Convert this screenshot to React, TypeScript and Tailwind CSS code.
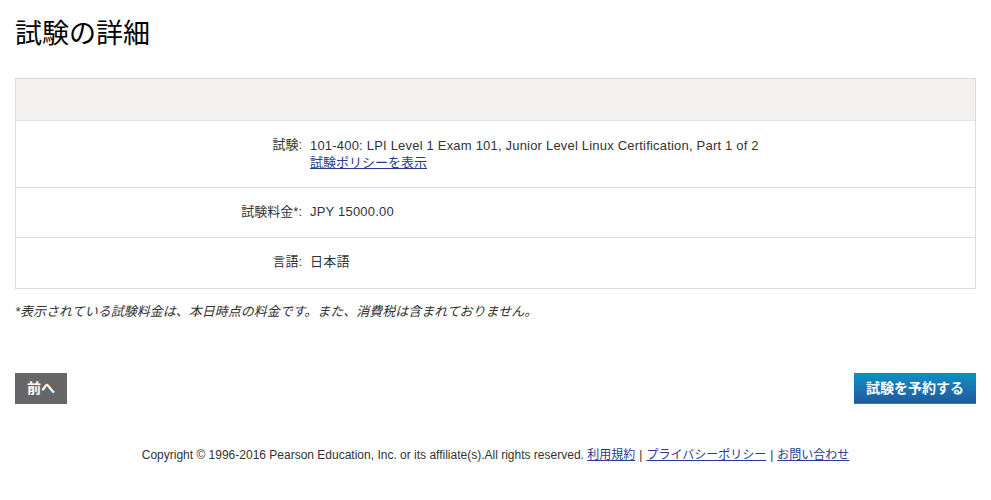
const FONT = "font-['Liberation_Sans','Noto_Sans_CJK_JP',sans-serif]";

const ROWS = [
  {
    label: "試験:",
    value: "101-400: LPI Level 1 Exam 101, Junior Level Linux Certification, Part 1 of 2",
    link: "試験ポリシーを表示",
  },
  { label: "試験料金*:", value: "JPY 15000.00" },
  { label: "言語:", value: "日本語" },
];

function DetailRow({ label, value, link }: { label: string; value: string; link?: string }) {
  return (
    <div className="flex gap-2 border-t border-[#dddddd] py-4 text-[13px] leading-4 text-[#333333] first:border-t-0 last:pb-[17px]">
      <div className="w-[286px] shrink-0 text-right">{label}</div>
      <div>
        <p className={link ? "py-[1px] tracking-[0.2px]" : "pb-[1px] tracking-[0.2px]"}>{value}</p>
        {link && (
          <a href="#" className="text-[#2b3990] underline">
            {link}
          </a>
        )}
      </div>
    </div>
  );
}

export default function App() {
  return (
    <div className={`${FONT} min-h-[500px] bg-white px-[15px] pt-[18px]`}>
      <h1 className="text-[27px] leading-8 text-black">試験の詳細</h1>

      <div className="mt-7 border border-[#dddddd]">
        <div className="h-[41px] bg-[#f2f1ef]" />
        <div className="border-t border-[#e4e4e4]">
          {ROWS.map((row) => (
            <DetailRow key={row.label} {...row} />
          ))}
        </div>
      </div>

      <p className="mt-[15px] text-[13px] italic leading-4 text-[#333333]">
        *表示されている試験料金は、本日時点の料金です。また、消費税は含まれておりません。
      </p>

      <div className="mt-[53px] flex items-center justify-between">
        <button className="h-[31px] bg-[#666666] px-3 text-[14px] font-bold text-white">前へ</button>
        <button className="h-[31px] border-b border-[#1c86c2] bg-gradient-to-b from-[#0990c6] to-[#1f5a9b] px-3 text-[14px] font-bold text-white">
          試験を予約する
        </button>
      </div>

      <footer className="mt-[43px] text-center text-[12px] leading-4 text-[#333333]">
        Copyright © 1996-2016 Pearson Education, Inc. or its affiliate(s).All rights reserved.{" "}
        <a href="#" className="text-[#2b3990] underline">利用規約</a>
        <span className="mx-1">|</span>
        <a href="#" className="text-[#2b3990] underline">プライバシーポリシー</a>
        <span className="mx-1">|</span>
        <a href="#" className="text-[#2b3990] underline">お問い合わせ</a>
      </footer>
    </div>
  );
}
